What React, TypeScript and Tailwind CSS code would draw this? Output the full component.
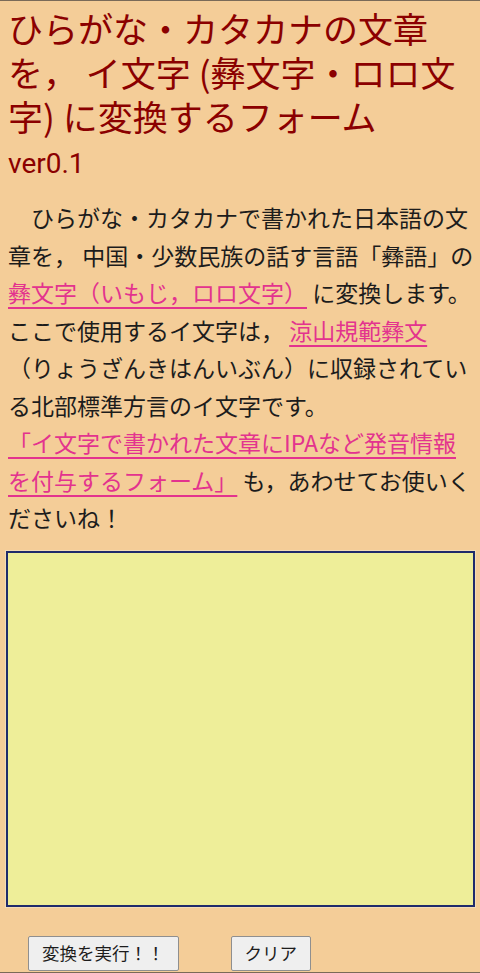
import { useState } from "react";

const jp = "font-['Noto_Sans_CJK_JP','Noto_Sans',sans-serif]";

export default function App() {
  const [text, setText] = useState("");

  return (
    <div className={`${jp} h-[973px] overflow-hidden bg-[#f4cd98] border-t border-b border-[#7a6a58] text-[#1c1c1c]`}>
      <div className="pl-2 pr-0">
        {/* Title */}
        <h1 className="pt-[5px] text-[35px] leading-[44px] text-[#8b0000] font-normal">
          ひらがな・カタカナの文章を， イ文字 (彝文字・ロロ文字) に変換するフォーム
        </h1>
        <div className="mt-[6px] h-[40px] text-[28px] leading-[40px] text-[#8b0000] font-['Roboto','Noto_Sans',sans-serif]">
          ver0.1
        </div>

        {/* Description */}
        <p className="mt-[15px] text-[23px] leading-[37.5px] indent-[1em]">
          ひらがな・カタカナで書かれた日本語の文<br />
          章を， 中国・少数民族の話す言語「彝語」の<br />
          <a href="#" className="text-[#e3338e] underline underline-offset-[5px]">
            彝文字（いもじ，ロロ文字）
          </a>{" "}
          に変換します。<br />
          ここで使用するイ文字は，{" "}
          <a href="#" className="text-[#e3338e] underline underline-offset-[5px]">
            涼山規範彝文
          </a>
          <br />
          （りょうざんきはんいぶん）に収録されてい<br />
          る北部標準方言のイ文字です。<br />
          <a href="#" className="text-[#e3338e] underline underline-offset-[5px]">
            「イ文字で書かれた文章にIPAなど発音情報<br />
            を付与するフォーム」
          </a>{" "}
          も，あわせてお使いく<br />
          ださいね！
        </p>

        {/* Input */}
        <textarea
          value={text}
          onChange={(e) => setText(e.target.value)}
          className="mt-[14px] -ml-[2px] block w-[469px] h-[356px] bg-[#eeee99] border-2 border-[#1f2b6b] outline outline-1 outline-[#f3dcb6] resize-none p-1 text-[18px]"
        />

        {/* Buttons */}
        <div className="mt-[29px] flex items-center gap-[52px] pl-5">
          <button className="h-[35px] px-[13px] bg-[#efefef] border border-[#8f8f8f] rounded-[2px] text-[17.5px] leading-none text-[#1c1c1c]">
            変換を実行！！
          </button>
          <button
            onClick={() => setText("")}
            className="h-[35px] px-[13px] bg-[#efefef] border border-[#8f8f8f] rounded-[2px] text-[17.5px] leading-none text-[#1c1c1c]"
          >
            クリア
          </button>
        </div>
      </div>
    </div>
  );
}
